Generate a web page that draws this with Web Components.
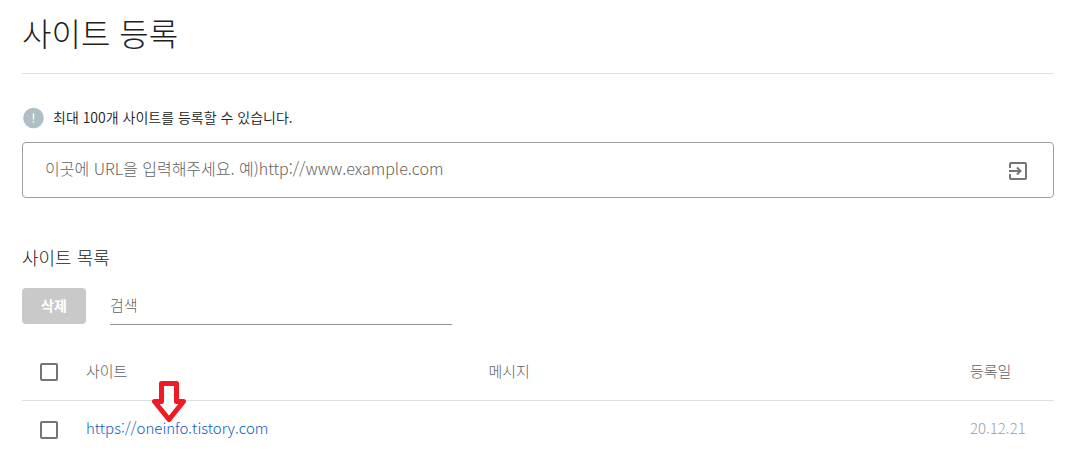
<!DOCTYPE html>
<html lang="ko">
<head>
<meta charset="utf-8">
<title>사이트 등록</title>
<style>
	body {
		margin: 0;
		background: #fff;
		color: #212121;
		font: 300 15px/20px "Noto Sans CJK KR", sans-serif;
	}
</style>
</head>
<body>
<site-page>
	<page-title>사이트 등록</page-title>
	<info-notice>최대 100개 사이트를 등록할 수 있습니다.</info-notice>
	<url-field placeholder="이곳에 URL을 입력해주세요. 예)http://www.example.com"></url-field>
	<site-list heading="사이트 목록"></site-list>
</site-page>
<script>
class SitePage extends HTMLElement {
	constructor(){
		super();
		this.attachShadow({mode:"open"});
		this.shadowRoot.innerHTML = /*html*/`
			<style>
				:host {
					display: block;
					padding: 0 27px 0 22px;
				}
				main {
					display: flex;
					flex-direction: column;
				}
			</style>
			<main><slot></slot></main>
		`;
	}
}
customElements.define("site-page",SitePage);

class PageTitle extends HTMLElement {
	constructor(){
		super();
		this.attachShadow({mode:"open"});
		this.shadowRoot.innerHTML = /*html*/`
			<style>
				:host {
					display: block;
					border-bottom: 1px solid #e0e0e0;
					padding: 8px 0 17px;
				}
				h1 {
					margin: 0;
					font-size: 32px;
					font-weight: 300;
					line-height: 48px;
				}
			</style>
			<h1><slot></slot></h1>
		`;
	}
}
customElements.define("page-title",PageTitle);

class InfoNotice extends HTMLElement {
	constructor(){
		super();
		this.attachShadow({mode:"open"});
		this.shadowRoot.innerHTML = /*html*/`
			<style>
				:host {
					display: flex;
					align-items: center;
					gap: 7px;
					padding: 32px 0 12px;
					font-size: 14px;
					font-weight: 350;
					line-height: 20px;
				}
				svg {
					display: block;
					flex: none;
				}
				span {
					padding-bottom: 2px;
				}
			</style>
			<svg width="24" height="24" viewBox="0 0 24 24" aria-hidden="true">
				<circle cx="11.5" cy="12" r="10.300" fill="#b0bec5"/>
				<path d="M10.800 7.500h1.400v6h-1.400zM10.800 15h1.400v1.500h-1.400z" fill="#fff"/>
			</svg>
			<span><slot></slot></span>
		`;
	}
}
customElements.define("info-notice",InfoNotice);

class UrlField extends HTMLElement {
	constructor(){
		super();
		this.attachShadow({mode:"open"});
		this.shadowRoot.innerHTML = /*html*/`
			<style>
				:host {
					display: flex;
					align-items: center;
					box-sizing: border-box;
					height: 56px;
					padding: 2px 23px 0 22px;
					border: 1px solid #9e9e9e;
					border-radius: 4px;
				}
				input {
					flex: 1;
					min-width: 0;
					padding: 0 0 6px;
					border: 0;
					outline: 0;
					background: none;
					color: inherit;
					font: inherit;
					font-size: 16px;
				}
				input::placeholder {
					color: #616161;
					opacity: 1;
				}
				button {
					padding: 0;
					border: 0;
					background: none;
					color: #757575;
					cursor: pointer;
				}
				svg {
					display: block;
				}
			</style>
			<input type="url" aria-label="사이트 URL">
			<button type="button" aria-label="등록">
				<svg width="24" height="24" viewBox="0 0 24 24" fill="none" stroke="currentColor" stroke-width="2">
					<path d="M4 9V5q0-1 1-1h14q1 0 1 1v14q0 1-1 1H5q-1 0-1-1v-4M3 12h11M11 8.500l3.500 3.500-3.500 3.500"/>
				</svg>
			</button>
		`;
		this.shadowRoot.querySelector("input").placeholder = this.getAttribute("placeholder");
	}
}
customElements.define("url-field",UrlField);

class CheckBox extends HTMLElement {
	constructor(){
		super();
		this.attachShadow({mode:"open"});
		this.shadowRoot.innerHTML = /*html*/`
			<style>
				:host {
					display: block;
					width: 18px;
					height: 18px;
				}
				input {
					display: block;
					appearance: none;
					box-sizing: border-box;
					width: 18px;
					height: 18px;
					margin: 0;
					border: 2px solid #757575;
					border-radius: 2px;
				}
				input:checked {
					background: #757575;
				}
			</style>
			<input type="checkbox">
		`;
		this._input = this.shadowRoot.querySelector("input");
		this._input.setAttribute("aria-label",this.getAttribute("label")||"선택");
	}

	get checked(){
		return this._input.checked;
	}

	set checked(checked){
		this._input.checked = checked;
	}
}
customElements.define("check-box",CheckBox);

class PointerArrow extends HTMLElement {
	constructor(){
		super();
		this.attachShadow({mode:"open"});
		this.shadowRoot.innerHTML = /*html*/`
			<style>
				:host {
					display: block;
					pointer-events: none;
				}
				svg {
					display: block;
				}
			</style>
			<svg width="34" height="42" viewBox="0 0 34 42" aria-hidden="true">
				<path d="M9.500 2.500h15v18h7L17 38.500 2.500 20.500h7z" fill="#fff" stroke="#ed1c24" stroke-width="5" stroke-linejoin="round"/>
			</svg>
		`;
	}
}
customElements.define("pointer-arrow",PointerArrow);

class SiteList extends HTMLElement {
	constructor(){
		super();
		this.attachShadow({mode:"open"});
		this.shadowRoot.innerHTML = /*html*/`
			<style>
				:host {
					display: block;
					padding-top: 47px;
				}
				h2 {
					margin: 0;
					font-size: 18px;
					font-weight: 300;
					line-height: 24px;
				}
				.tools {
					display: flex;
					align-items: flex-start;
					gap: 24px;
					padding: 19px 0;
				}
				.tools button {
					width: 64px;
					height: 36px;
					padding: 0 0 2px;
					border: 0;
					border-radius: 4px;
					background: #c9c9c9;
					color: #fff;
					font: inherit;
					font-size: 14px;
					font-weight: 700;
				}
				.tools input {
					box-sizing: border-box;
					width: 342px;
					height: 37px;
					padding: 0 0 3px;
					border: 0;
					border-bottom: 1px solid #949494;
					outline: 0;
					background: none;
					color: inherit;
					font: inherit;
				}
				.tools input::placeholder {
					color: #616161;
					opacity: 1;
				}
				table {
					width: 100%;
					border-collapse: collapse;
					table-layout: fixed;
				}
				th, td {
					height: 54px;
					padding: 0 0 2px;
					text-align: left;
					font-weight: 300;
				}
				th {
					border-bottom: 1px solid #e0e0e0;
					color: #616161;
				}
				td {
					padding-bottom: 4px;
				}
				.check {
					width: 64px;
					padding: 0;
				}
				.check check-box {
					margin-left: 18px;
				}
				.site {
					width: 39%;
				}
				.date {
					width: 84px;
				}
				td.site {
					position: relative;
				}
				td.date {
					color: #9e9e9e;
				}
				a {
					color: #0d5bc6;
					text-decoration: none;
				}
				pointer-arrow {
					position: absolute;
					left: 66px;
					top: -20px;
				}
			</style>
			<h2></h2>
			<div class="tools">
				<button type="button" disabled>삭제</button>
				<input type="search" placeholder="검색" aria-label="검색">
			</div>
			<table>
				<thead>
					<tr>
						<th class="check"><check-box id="all" label="모두 선택"></check-box></th>
						<th class="site">사이트</th>
						<th>메시지</th>
						<th class="date">등록일</th>
					</tr>
				</thead>
				<tbody>
					<tr>
						<td class="check"><check-box></check-box></td>
						<td class="site"><a href="https://oneinfo.tistory.com">https://oneinfo.tistory.com</a><pointer-arrow></pointer-arrow></td>
						<td></td>
						<td class="date">20.12.21</td>
					</tr>
				</tbody>
			</table>
		`;
		this.shadowRoot.querySelector("h2").textContent = this.getAttribute("heading");
		const all = this.shadowRoot.getElementById("all");
		all.addEventListener("click",()=>{
			this.shadowRoot.querySelectorAll("tbody check-box").forEach(box=>{box.checked=all.checked;});
		});
	}
}
customElements.define("site-list",SiteList);
</script>
</body>
</html>
